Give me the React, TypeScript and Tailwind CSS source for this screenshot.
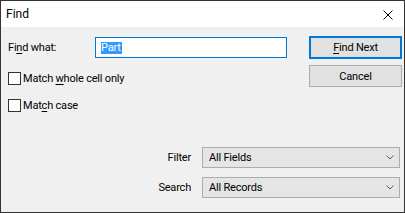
import React from "react";

function Checkbox({ children }: { children: React.ReactNode }) {
  return (
    <div className="flex items-center h-[15px]">
      <div className="w-[13px] h-[13px] border border-[#333333] bg-white shrink-0" />
      <span className="ml-[2px] leading-none">{children}</span>
    </div>
  );
}

function Chevron() {
  return (
    <svg width="8" height="5" viewBox="0 0 8 5" className="shrink-0 mr-[1px]">
      <path d="M0.5 0.5 L4 4 L7.5 0.5" fill="none" stroke="#606060" strokeWidth="1" />
    </svg>
  );
}

function Select({ value }: { value: string }) {
  return (
    <div className="w-[198px] h-[21px] border border-[#adadad] bg-[#e5e5e5] flex items-center justify-between pl-[6px] pr-[4px]">
      <span className="leading-none">{value}</span>
      <Chevron />
    </div>
  );
}

export default function App() {
  return (
    <div className="w-[405px] h-[213px] border border-[#333333] bg-[#f0f0f0] flex flex-col font-[Roboto,sans-serif] text-[11px] tracking-[-0.2px] text-black">
      {/* Title bar */}
      <div className="h-[26px] bg-white flex items-center justify-between pl-[5px] pr-[11px] shrink-0">
        <span className="text-[12px] tracking-normal leading-none">Find</span>
        <svg width="10" height="10" viewBox="0 0 10 10" className="mt-[1px]">
          <path d="M0.5 0.5 L9.5 9.5 M9.5 0.5 L0.5 9.5" stroke="#000" strokeWidth="1" />
        </svg>
      </div>

      {/* Body */}
      <div className="flex flex-col">
        <div className="flex pt-[9px] pl-[7px] pr-[2px]">
          <div className="flex-1 flex flex-col">
            <div className="flex items-center h-[21px] mt-[1px]">
              <span className="w-[87px] shrink-0 leading-none">
                Fi<span className="underline underline-offset-[2px]">n</span>d what:
              </span>
              <div className="w-[192px] h-[21px] border border-[#0078d7] bg-white flex items-center pl-[5px]">
                <span className="bg-[#3399ff] text-white leading-[12px] h-[12px] pr-[1px]">Part</span>
              </div>
            </div>
            <div className="mt-[13px]">
              <Checkbox>
                Match <span className="underline underline-offset-[2px]">w</span>hole cell only
              </Checkbox>
            </div>
            <div className="mt-[12px]">
              <Checkbox>
                Mat<span className="underline underline-offset-[2px]">c</span>h case
              </Checkbox>
            </div>
          </div>
          <div className="w-[93px] flex flex-col gap-[6px] shrink-0">
            <div className="h-[23px] border-2 border-[#0078d7] bg-[#e1e1e1] flex items-center justify-center">
              <span className="leading-none">
                <span className="underline underline-offset-[2px]">F</span>ind Next
              </span>
            </div>
            <div className="h-[22px] border border-[#adadad] bg-[#e1e1e1] flex items-center justify-center">
              <span className="leading-none">Cancel</span>
            </div>
          </div>
        </div>

        <div className="flex flex-col items-end pr-[4px] mt-[34px] gap-[9px]">
          <div className="flex items-center">
            <span className="leading-none mr-[11px]">Filter</span>
            <Select value="All Fields" />
          </div>
          <div className="flex items-center">
            <span className="leading-none mr-[11px]">Search</span>
            <Select value="All Records" />
          </div>
        </div>
      </div>
    </div>
  );
}
